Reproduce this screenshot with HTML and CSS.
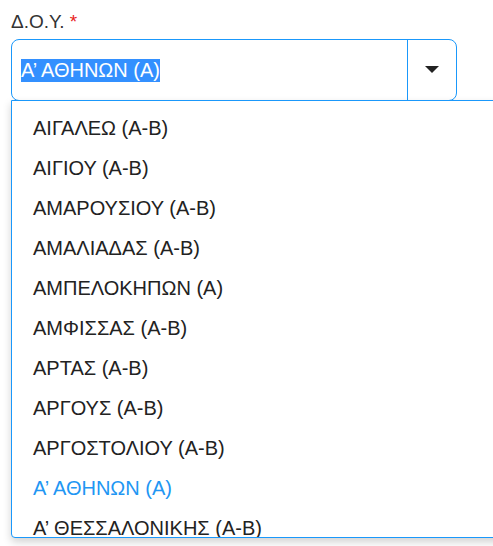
FILE: index.html
```html
<!DOCTYPE html>
<html lang="el">
<head>
    <meta charset="UTF-8">
    <meta name="viewport" content="width=device-width, initial-scale=1.0">
    <title>Δ.Ο.Υ.</title>
    <link rel="stylesheet" href="styles.css">
</head>
<body>
    <div class="field">
        <label class="field-label">Δ.Ο.Υ. <span class="required">*</span></label>
        <div class="select">
            <div class="select-value"><span class="selected-text">Α’ ΑΘΗΝΩΝ (Α)</span></div>
            <div class="select-toggle">
                <svg width="14" height="8" viewBox="0 0 14 8"><path d="M0 0 L14 0 L7 7 Z" fill="#222"/></svg>
            </div>
        </div>
        <ul class="options">
            <li>ΑΙΓΑΛΕΩ (Α-Β)</li>
            <li>ΑΙΓΙΟΥ (Α-Β)</li>
            <li>ΑΜΑΡΟΥΣΙΟΥ (Α-Β)</li>
            <li>ΑΜΑΛΙΑΔΑΣ (Α-Β)</li>
            <li>ΑΜΠΕΛΟΚΗΠΩΝ (Α)</li>
            <li>ΑΜΦΙΣΣΑΣ (Α-Β)</li>
            <li>ΑΡΤΑΣ (Α-Β)</li>
            <li>ΑΡΓΟΥΣ (Α-Β)</li>
            <li>ΑΡΓΟΣΤΟΛΙΟΥ (Α-Β)</li>
            <li class="active">Α’ ΑΘΗΝΩΝ (Α)</li>
            <li>Α’ ΘΕΣΣΑΛΟΝΙΚΗΣ (Α-Β)</li>
        </ul>
    </div>
</body>
</html>
```

FILE: styles.css
```css
* {
    margin: 0;
    padding: 0;
    box-sizing: border-box;
}

body {
    font-family: "Liberation Sans", Arial, sans-serif;
    background: white;
    color: #222;
    padding: 11px 0 0 11px;
    overflow: hidden;
    height: 546px;
}

.field {
    position: relative;
    width: 446px;
}

.field-label {
    display: block;
    font-size: 19px;
    line-height: 22px;
    color: #333;
    margin-bottom: 6px;
}

.required {
    color: #e8221b;
}

.select {
    display: flex;
    height: 62px;
    border: 1px solid #1a98fb;
    border-radius: 8px;
}

.select-value {
    flex: 1;
    display: flex;
    align-items: center;
    padding-left: 9px;
    font-size: 20px;
}

.selected-text {
    background: #3390ff;
    color: white;
}

.select-toggle {
    width: 49px;
    border-left: 1px solid #1a98fb;
    display: flex;
    align-items: center;
    justify-content: center;
}

.options {
    position: absolute;
    top: 89px;
    left: 0;
    width: 520px;
    height: 438px;
    overflow: hidden;
    list-style: none;
    background: white;
    border: 1px solid #1a98fb;
    border-radius: 0 0 4px 4px;
    box-shadow: 0 4px 8px rgba(0, 0, 0, 0.18);
    padding-top: 7px;
}

.options li {
    height: 40px;
    line-height: 40px;
    padding-left: 21px;
    font-size: 20px;
    color: #222;
}

.options li.active {
    color: #2196f3;
}
```
